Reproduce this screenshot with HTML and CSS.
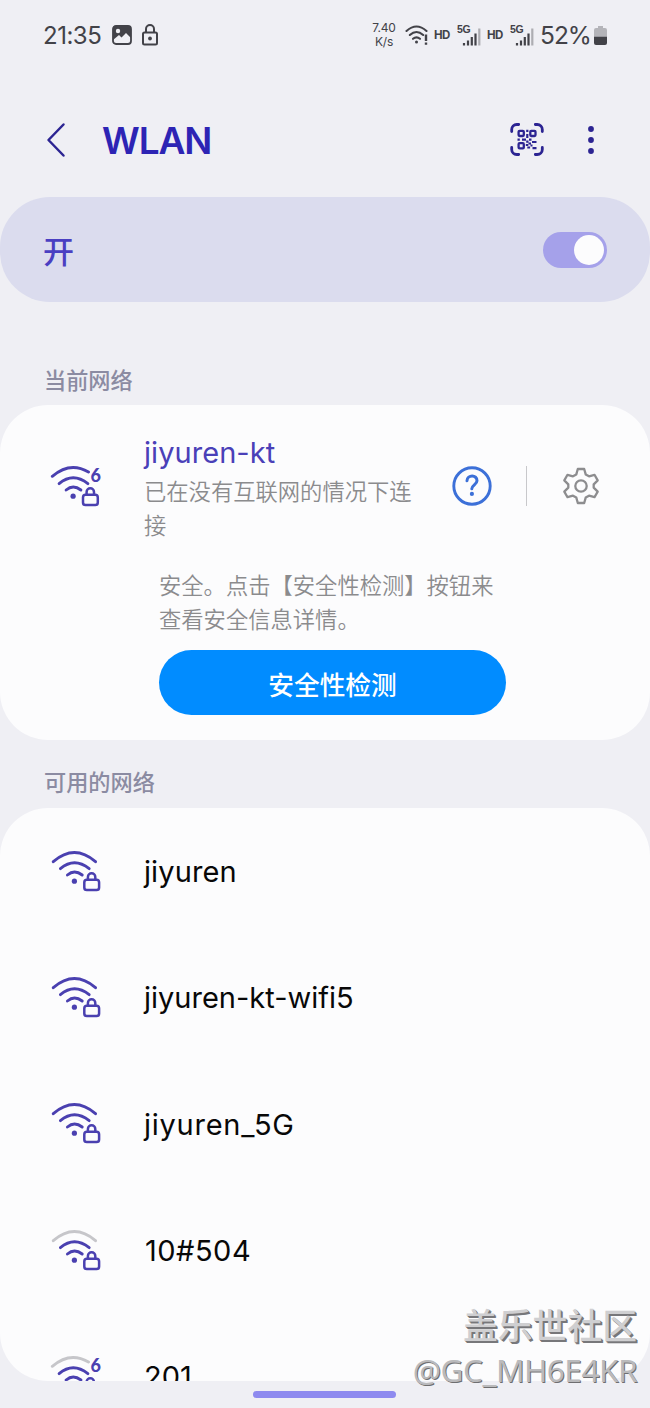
FILE: index.html
```html
<!DOCTYPE html>
<html lang="zh-CN">
<head>
<meta charset="utf-8">
<title>WLAN</title>
<link rel="stylesheet" href="styles.css">
</head>
<body>
<svg class="defs" width="0" height="0" aria-hidden="true">
  <symbol id="lock" viewBox="0 0 56 48">
    <rect x="36.300" y="31.800" width="14.800" height="10.200" rx="2.600" fill="none" stroke="currentColor" stroke-width="2.500"/>
    <path d="M39.900 31V29a3.700 3.700 0 0 1 7.400 0V31" fill="none" stroke="currentColor" stroke-width="2.500"/>
  </symbol>
  <symbol id="waves" viewBox="0 0 56 48">
    <g fill="none" stroke="currentColor" stroke-width="2.9" stroke-linecap="round">
      <path d="M12.400 20.600Q26.400 8.800 41.200 20.600"/>
      <path d="M19.400 27Q26.400 21 34.200 27"/>
    </g>
    <circle cx="26.400" cy="33.200" r="2.600" fill="currentColor"/>
  </symbol>
  <symbol id="wifi" viewBox="0 0 56 48">
    <path class="outer" d="M5.300 13.700Q26.400-4.500 47.500 13.700" fill="none" stroke-width="2.900" stroke-linecap="round"/>
    <use href="#waves"/><use href="#lock"/>
  </symbol>
  <symbol id="wifi6" viewBox="0 0 56 48">
    <path class="outer" d="M4.300 13.300Q22-2 40.500 9" fill="none" stroke-width="2.900" stroke-linecap="round"/>
    <g transform="translate(-1.300 0)"><use href="#waves" width="56" height="48"/><use href="#lock" width="56" height="48"/></g>
  </symbol>
  <symbol id="signal" viewBox="0 0 24 26">
    <path d="M7 21v2.500M11 18.500v5M14.800 15v8.500M18.500 11.500v12" stroke="#424248" stroke-width="2.200"/>
    <path d="M22.300 6.500v17" stroke="#adadb2" stroke-width="2.200"/>
  </symbol>
</svg>

<main class="screen">
  <header class="status">
    <span class="clock">21:35</span>
    <svg class="photo" width="20" height="20" viewBox="0 0 20 20"><rect x="1" y="1" width="18" height="18" rx="3" fill="none" stroke="#424248" stroke-width="1.800"/><path d="M1 3a2 2 0 0 1 2-2h14a2 2 0 0 1 2 2v10l-5-5-4.500 4.500-2.500-2.500-6 5z" fill="#424248"/><circle cx="6" cy="6" r="2.200" fill="#efeff4"/></svg>
    <svg class="padlock" width="18" height="22" viewBox="0 0 18 22"><rect x="2" y="8.500" width="14" height="12" rx="1.500" fill="none" stroke="#424248" stroke-width="2"/><path d="M5 8V5a4 4 0 0 1 8 0v3" fill="none" stroke="#424248" stroke-width="2"/><circle cx="9" cy="14.500" r="1.900" fill="#424248"/></svg>
    <span class="speed"><span>7.40</span><span>K/s</span></span>
    <svg class="net" width="24" height="22" viewBox="0 0 24 22"><g fill="none" stroke="#424248" stroke-width="2.100" stroke-linecap="round"><path d="M1.500 7Q11.500-2 21.500 7"/><path d="M4.800 11Q11.500 5 18.200 11"/><path d="M8 14.800Q11.500 11.800 15 14.800"/></g><circle cx="11.500" cy="18" r="1.500" fill="#424248"/><path d="M21 10.500v6.500M21 18.500v2.200" stroke="#424248" stroke-width="2.400"/></svg>
    <span class="hd">HD</span>
    <svg class="sig" width="24" height="26"><use href="#signal"/><text x="0" y="11" class="five">5G</text></svg>
    <span class="hd hd2">HD</span>
    <svg class="sig" width="24" height="26"><use href="#signal"/><text x="0" y="11" class="five">5G</text></svg>
    <span class="pct">52%</span>
    <svg class="battery" width="13" height="19" viewBox="0 0 13 19"><path d="M4 0h5v2h2a2 2 0 0 1 2 2v6H0V4a2 2 0 0 1 2-2h2z" fill="#b4b4b9"/><path d="M0 10.500h13V17a2 2 0 0 1-2 2H2a2 2 0 0 1-2-2z" fill="#424248"/></svg>
  </header>

  <nav class="bar">
    <svg width="20" height="36" viewBox="0 0 20 36"><path d="M17.500 2.500L2.500 18l15 15.500" fill="none" stroke="#2c2492" stroke-width="2.500" stroke-linecap="round" stroke-linejoin="round"/></svg>
    <h1 class="title">WLAN</h1>
    <svg class="qr" width="34" height="34" viewBox="0 0 34 34" fill="none" stroke="#2c2492">
      <path d="M1.700 8.500V6.500a5 5 0 0 1 5-5h2M25.300 1.500h2a5 5 0 0 1 5 5v2M32.300 24.500v2a5 5 0 0 1-5 5h-2M8.700 31.500h-2a5 5 0 0 1-5-5v-2" stroke-width="2.800" stroke-linecap="round"/>
      <rect x="8.600" y="7.800" width="5.200" height="5.200" rx="1" stroke-width="2.300"/><rect x="20.300" y="7.800" width="5.200" height="5.200" rx="1" stroke-width="2.300"/><rect x="8.600" y="20.200" width="5.200" height="5.200" rx="1" stroke-width="2.300"/>
      <path d="M17.300 6.700v2.300M17.300 11v4M7.500 16.700h2.300M12 16.700h4M19 16.700h2.500M16.200 18.700h2.300M18.500 20.500h2.500M15.800 22h2.500M22 19h4.500M20.500 22.500h2M17.300 24.500h2.800M22.500 25.200h4" stroke-width="2.200"/>
    </svg>
    <svg class="more" width="8" height="30" viewBox="0 0 8 30" fill="#2c2492"><circle cx="4" cy="4" r="2.900"/><circle cx="4" cy="15" r="2.900"/><circle cx="4" cy="26" r="2.900"/></svg>
  </nav>

  <section class="switch-card">
    <span class="on">开</span>
    <span class="toggle"><span class="knob"></span></span>
  </section>

  <h2 class="heading current-heading">当前网络</h2>
  <section class="card current">
    <div class="network">
      <svg class="wifi" width="56" height="48"><use href="#wifi6"/><text x="42.600" y="18.600" class="gen">6</text></svg>
      <div class="info"><div class="ssid">jiyuren-kt</div><div class="state">已在没有互联网的情况下连接</div></div>
      <svg class="help" width="40" height="40" viewBox="0 0 40 40" fill="none" stroke="#3c70d8"><circle cx="20" cy="20" r="18.200" stroke-width="2.900"/><path d="M15 14.800c.3-6.300 10.200-6.300 10 0 0 3.800-5.200 4.400-5.200 8" stroke-width="3" stroke-linecap="round"/><circle cx="19.900" cy="27.900" r="2.100" fill="#3c70d8" stroke="none"/></svg>
      <span class="divider"></span>
      <svg class="gear" width="38" height="38" viewBox="0 0 38 38" fill="none" stroke="#8d8d8f" stroke-width="2.300" stroke-linejoin="round"><path d="M15.800 2h6.400l1.500 5.400 3.300 1.900 5.500-1.500 3.200 5.600-4 4v3.200l4 4-3.200 5.600-5.500-1.500-3.300 1.900-1.500 5.400h-6.400l-1.500-5.400L11 28.700l-5.500 1.500-3.200-5.600 4-4v-3.200l-4-4 3.200-5.600L11 9.300l3.300-1.900z"/><circle cx="19" cy="19" r="5.700"/></svg>
    </div>
    <div class="security">
      <p class="note">安全。点击【安全性检测】按钮来<br>查看安全信息详情。</p>
      <button class="check">安全性检测</button>
    </div>
  </section>

  <h2 class="heading available-heading">可用的网络</h2>
  <section class="card list">
    <div class="row"><svg class="wifi" width="56" height="48"><use href="#wifi"/></svg><span class="n1">jiyuren</span></div>
    <div class="row"><svg class="wifi" width="56" height="48"><use href="#wifi"/></svg><span class="n2">jiyuren-kt-wifi5</span></div>
    <div class="row"><svg class="wifi" width="56" height="48"><use href="#wifi"/></svg><span class="n3">jiyuren_5G</span></div>
    <div class="row"><svg class="wifi weak" width="56" height="48"><use href="#wifi"/></svg><span class="n4">10#504</span></div>
    <div class="row"><svg class="wifi weak" width="56" height="48"><use href="#wifi6"/><text x="42.600" y="18.600" class="gen">6</text></svg><span class="n5">201</span></div>
  </section>
  <div class="home"></div>
  <div class="watermark"><div class="community">盖乐世社区</div><div class="author">@GC_MH6E4KR</div></div>
</main>
</body>
</html>
```
FILE: styles.css
```css
* { box-sizing: border-box; }
body { margin: 0; background: #efeff4; }
.defs { position: absolute; }
.screen {
  position: relative;
  width: 650px;
  height: 1408px;
  overflow: hidden;
  background: #efeff4;
  font-family: Inter, "Noto Sans CJK SC", sans-serif;
}
svg { flex: none; display: block; }
h1, h2, p { margin: 0; }

.status { display: flex; align-items: center; height: 70px; padding-left: 43px; color: #424248; white-space: nowrap; }
.clock { width: 69px; font-size: 24px; letter-spacing: -0.5px; }
.padlock { margin-left: 9px; }
.speed { display: flex; flex-direction: column; width: 26px; margin-left: 212px; font-size: 12px; line-height: 14px; text-align: center; letter-spacing: -0.2px; }
.net { margin-left: 8px; }
.hd { width: 17px; margin-left: 5px; font-size: 11.500px; font-weight: 700; letter-spacing: -0.6px; }
.sig { margin-left: 6px; }
.hd2 { margin-left: 6px; }
.five { font: 700 10.500px "Liberation Sans", sans-serif; letter-spacing: -0.3px; fill: #424248; }
.pct { width: 50px; margin-left: 6px; font-size: 24.500px; letter-spacing: -1px; }
.battery { margin-left: 4px; }

.bar { display: flex; align-items: center; height: 127px; padding-left: 46px; }
.bar > * { margin-bottom: -12px; }
.title { width: 408px; margin-left: 36px; color: #2d24b4; font-size: 37px; line-height: 44px; font-weight: 600; letter-spacing: -1.1px; padding-top: 2px; }
.more { margin-left: 43px; }

.switch-card { display: flex; align-items: center; justify-content: space-between; height: 105px; padding: 0 43px; border-radius: 50px; background: #dbdcee; }
.on { padding-top: 4px; color: #4a3fc2; font-size: 31px; font-weight: 500; line-height: 50px; }
.toggle { display: flex; justify-content: flex-end; width: 64px; height: 36px; padding: 3px; border-radius: 18px; background: #a5a1ea; }
.knob { width: 30px; height: 30px; border-radius: 50%; background: #fcfcfd; }

.heading { padding-left: 44px; color: #8b8ba2; font-size: 22.200px; font-weight: 500; line-height: 32px; }
.current-heading { margin-top: 63px; }
.card { background: #fcfcfd; border-radius: 48px; overflow: hidden; }
.current { height: 335px; margin-top: 8px; }
.network { display: flex; padding: 31px 0 0 48px; height: 164px; }
.wifi { color: #4a40b0; }
.outer { stroke: var(--outer, currentColor); }
.weak { --outer: #c6c6ca; }
.network .wifi { margin-top: 27px; }
.info { width: 280px; margin-left: 40px; }
.ssid { color: #4a40b8; font-size: 29px; line-height: 34px; letter-spacing: 0.05px; }
.state { color: #8b8b8d; font-size: 22.300px; font-weight: 350; line-height: 34px; margin-top: 5px; }
.help { margin: 30px 0 0 28px; }
.divider { width: 1px; height: 40px; margin: 30px 0 0 34px; background: #c8c8cb; }
.gear { margin: 31px 0 0 35px; }
.gen { font: 900 18px Lato, sans-serif; fill: currentColor; }
.security { padding-left: 159px; }
.note { color: #8b8b8d; font-size: 22.300px; font-weight: 350; line-height: 34px; }
.check { display: block; width: 347px; height: 65px; margin-top: 13px; border: 0; padding: 3px 0 0; border-radius: 33px; background: #018cff; color: #fff; font: 500 25.700px/38px "Noto Sans CJK SC", sans-serif; }

.available-heading { margin-top: 27px; }
.list { height: 573px; margin-top: 9px; padding-top: 0.5px; }
.row { display: flex; align-items: center; height: 126.300px; padding-left: 48px; color: #080808; font-size: 29px; white-space: nowrap; }
.row span { margin-left: 40px; }
.row .n1 { letter-spacing: 0.1px; }
.row .n3 { letter-spacing: 0.75px; }
.row .n4 { margin-left: 41px; letter-spacing: 0.5px; }
.home { width: 143px; height: 7px; margin: 10px auto 0 253px; border-radius: 4px; background: #8e8aef; }

.watermark { position: absolute; right: 13px; top: 1301px; text-align: right; color: #cfcfd1; white-space: nowrap; }
.community { text-shadow: 1px 1px 0 #77777a, 2px 2px 0 #77777a; font: 500 34.800px/46px "Noto Sans CJK SC", sans-serif; }
.author { color: #bababc; text-shadow: 1px 1px 0 #6e6e70; font: 400 31.500px/46px "Noto Sans", sans-serif; letter-spacing: -0.5px; }
```
